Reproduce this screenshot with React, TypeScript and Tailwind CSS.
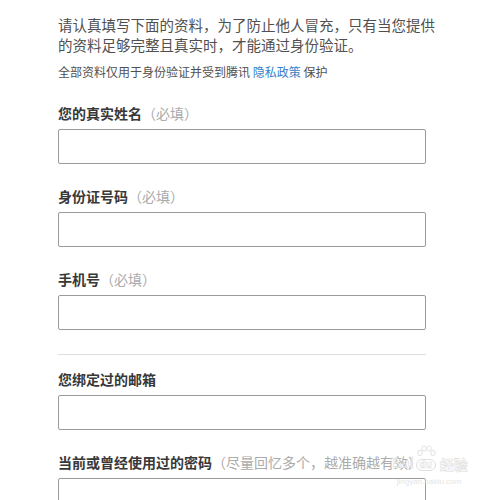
import React from "react";

const font = { fontFamily: '"Noto Sans CJK SC", "Noto Sans", sans-serif' };

function Field({ label, hint }: { label: string; hint?: string }) {
  return (
    <div className="flex flex-col gap-[6px]">
      <div className="text-[14px] leading-[20px] whitespace-nowrap">
        <span className="font-bold text-[#383838]">{label}</span>
        {hint && <span className="text-[#ababab]">{hint}</span>}
      </div>
      <div className="h-[35px] w-full rounded-[2px] border border-[#9a9a9a] bg-white" />
    </div>
  );
}

export default function App() {
  return (
    <div className="relative h-[500px] w-[500px] overflow-hidden bg-white" style={font}>
      <div className="ml-[58px] flex w-[368px] flex-col pt-[15px]">
        <div className="flex flex-col gap-[8px]">
          <p className="text-[14.5px] leading-[20px] text-[#505050] whitespace-nowrap">
            请认真填写下面的资料，为了防止他人冒充，只有当您提供
            <br />
            的资料足够完整且真实时，才能通过身份验证。
          </p>
          <p className="text-[12px] leading-[18px] text-[#505050] whitespace-nowrap">
            全部资料仅用于身份验证并受到腾讯 <span className="text-[#3b7fc8]">隐私政策</span> 保护
          </p>
        </div>
        <div className="mt-[22px] flex flex-col gap-[22px]">
          <Field label="您的真实姓名" hint="（必填）" />
          <Field label="身份证号码" hint="（必填）" />
          <Field label="手机号" hint="（必填）" />
        </div>
        <div className="mt-[24px] mb-[14px] h-px w-full bg-[#dedede]" />
        <div className="flex flex-col gap-[22px]">
          <Field label="您绑定过的邮箱" />
          <Field label="当前或曾经使用过的密码" hint="（尽量回忆多个，越准确越有效）" />
        </div>
      </div>

      {/* Baidu jingyan watermark overlay */}
      <div className="pointer-events-none absolute left-[383px] top-[445px] flex w-[92px] flex-col items-center opacity-70">
        <div className="flex items-end gap-[2px]">
          <span className="text-[15px] font-bold leading-[16px] text-white" style={{ WebkitTextStroke: "0.6px #cfcfcf", fontFamily: '"Liberation Sans", sans-serif' }}>
            Bai
          </span>
          <span className="flex flex-col items-center">
            <svg width="20" height="14" viewBox="0 0 20 14">
              <g fill="none" stroke="#d6d6d6" strokeWidth="1">
                <ellipse cx="4" cy="8" rx="2.2" ry="2.8" />
                <ellipse cx="8" cy="3.5" rx="2.2" ry="2.6" />
                <ellipse cx="13" cy="3.5" rx="2.2" ry="2.6" />
                <ellipse cx="17" cy="8" rx="2.2" ry="2.8" />
              </g>
            </svg>
            <span className="flex h-[12px] w-[20px] items-center justify-center rounded-[6px] border border-[#d2d2d2] text-[10px] font-bold leading-none text-white" style={{ WebkitTextStroke: "0.5px #cfcfcf", fontFamily: '"Liberation Sans", sans-serif' }}>
              du
            </span>
          </span>
          <span className="ml-[2px] text-[14px] font-bold leading-[14px] text-white" style={{ WebkitTextStroke: "0.6px #cfcfcf" }}>
            经验
          </span>
        </div>
        <div className="mt-[6px] text-[8px] leading-[10px] text-[#dadada]" style={{ fontFamily: '"Liberation Sans", sans-serif' }}>
          jingyan.baidu.com
        </div>
      </div>
    </div>
  );
}
